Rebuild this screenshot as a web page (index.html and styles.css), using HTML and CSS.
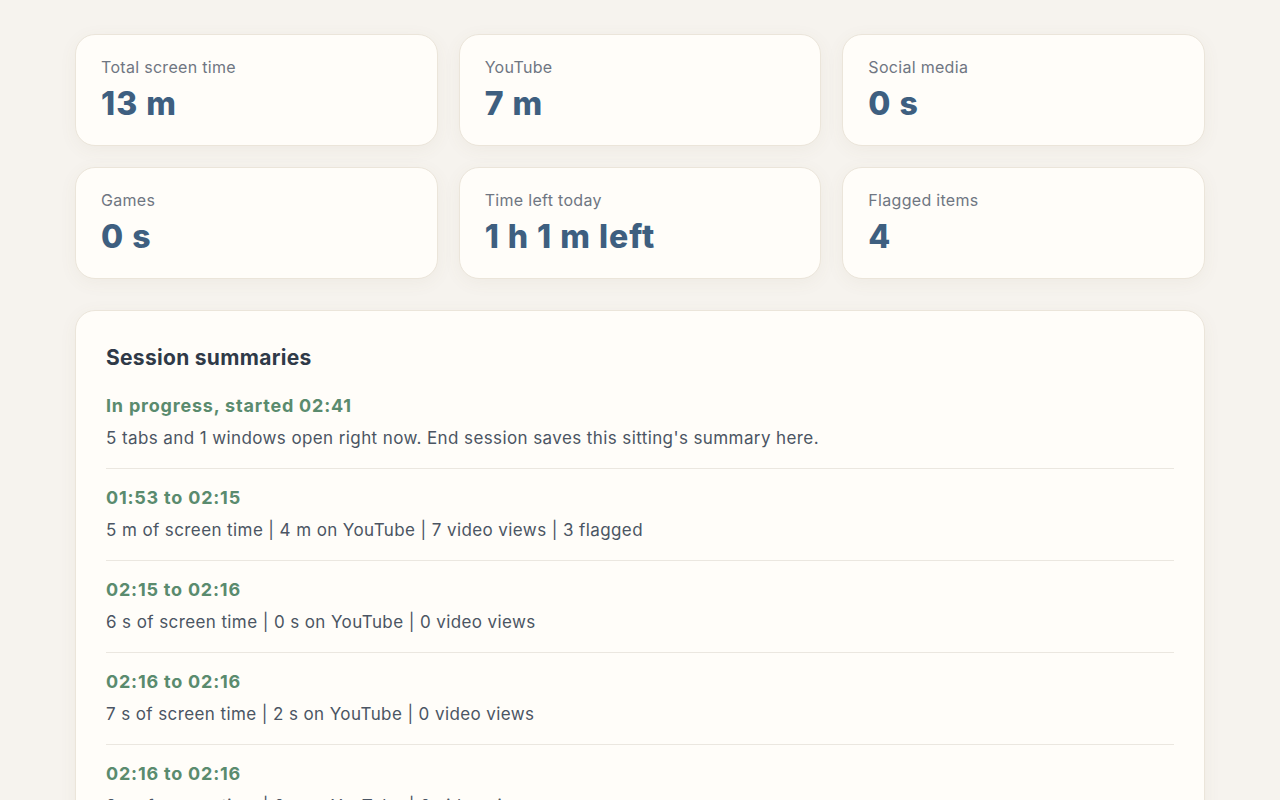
FILE: index.html
```html
<!DOCTYPE html>
<html lang="en">
<head>
    <meta charset="UTF-8">
    <title>Screen time</title>
    <link rel="stylesheet" href="styles.css">
</head>
<body>
    <div class="page">
        <div class="stats">
            <div class="stat">
                <div class="stat-label">Total screen time</div>
                <div class="stat-value">13 m</div>
            </div>
            <div class="stat">
                <div class="stat-label">YouTube</div>
                <div class="stat-value">7 m</div>
            </div>
            <div class="stat">
                <div class="stat-label">Social media</div>
                <div class="stat-value">0 s</div>
            </div>
            <div class="stat">
                <div class="stat-label">Games</div>
                <div class="stat-value">0 s</div>
            </div>
            <div class="stat">
                <div class="stat-label">Time left today</div>
                <div class="stat-value">1 h 1 m left</div>
            </div>
            <div class="stat">
                <div class="stat-label">Flagged items</div>
                <div class="stat-value">4</div>
            </div>
        </div>

        <div class="panel">
            <h2>Session summaries</h2>
            <div class="sessions">
                <div class="session">
                    <div class="session-title">In progress, started 02:41</div>
                    <div class="session-text">5 tabs and 1 windows open right now. End session saves this sitting's summary here.</div>
                </div>
                <div class="session">
                    <div class="session-title">01:53 to 02:15</div>
                    <div class="session-text">5 m of screen time | 4 m on YouTube | 7 video views | 3 flagged</div>
                </div>
                <div class="session">
                    <div class="session-title">02:15 to 02:16</div>
                    <div class="session-text">6 s of screen time | 0 s on YouTube | 0 video views</div>
                </div>
                <div class="session">
                    <div class="session-title">02:16 to 02:16</div>
                    <div class="session-text">7 s of screen time | 2 s on YouTube | 0 video views</div>
                </div>
                <div class="session">
                    <div class="session-title">02:16 to 02:16</div>
                    <div class="session-text">9 s of screen time | 0 s on YouTube | 0 video views</div>
                </div>
            </div>
        </div>
    </div>
</body>
</html>
```

FILE: styles.css
```css
body {
    margin: 0;
    background-color: #f6f3ee;
    font-family: Inter, "Noto Sans", sans-serif;
    color: #4b5563;
}
.page {
    max-width: 1130px;
    margin: 0 auto;
    padding: 34px 0;
}
.stats {
    display: grid;
    grid-template-columns: repeat(3, 1fr);
    gap: 21px;
}
.stat {
    background-color: #fffdf9;
    border: 1px solid #ebe5da;
    border-radius: 20px;
    box-shadow: 0 4px 18px rgba(120, 100, 70, 0.06);
    padding: 21px 25px 20px;
    height: 112px;
    box-sizing: border-box;
}
.stat-label {
    font-size: 16px;
    letter-spacing: 0.3px;
    color: #6f7682;
    line-height: 22px;
}
.stat-value {
    font-size: 32px;
    font-weight: 800;
    letter-spacing: 1px;
    color: #3e5f80;
    line-height: 38px;
    margin-top: 7px;
}
.panel {
    margin-top: 31px;
    background-color: #fffdf9;
    border: 1px solid #ebe5da;
    border-radius: 20px;
    box-shadow: 0 4px 18px rgba(120, 100, 70, 0.06);
    padding: 33px 30px;
}
h2 {
    margin: 0 0 10px;
    font-size: 21px;
    font-weight: 700;
    letter-spacing: 0.3px;
    color: #2f3a48;
    line-height: 28px;
}
.session {
    padding: 12px 0 17px;
    border-bottom: 1px solid #ebe7e0;
}
.session + .session {
    padding-top: 17px;
}
.session-title {
    font-size: 18px;
    font-weight: 700;
    letter-spacing: 0.8px;
    color: #5a8b6e;
    line-height: 24px;
}
.session-text {
    font-size: 17px;
    letter-spacing: 0.4px;
    line-height: 26px;
    margin-top: 7px;
}
```
